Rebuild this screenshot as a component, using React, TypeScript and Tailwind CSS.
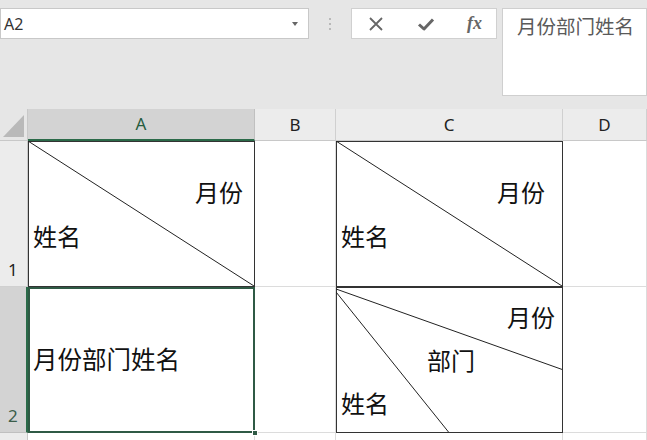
import React from 'react';

const cjk = { fontFamily: '"Microsoft YaHei", "Noto Sans CJK SC", sans-serif' };
const ui = { fontFamily: '"Noto Sans", "Open Sans", sans-serif' };

function Diagonal({ lines }: { lines: [number, number, number, number][] }) {
  return (
    <svg className="absolute inset-0 w-full h-full pointer-events-none" viewBox="0 0 227 146" preserveAspectRatio="none">
      {lines.map((l, i) => (
        <line key={i} x1={l[0]} y1={l[1]} x2={l[2]} y2={l[3]} stroke="#222" strokeWidth={1} vectorEffect="non-scaling-stroke" />
      ))}
    </svg>
  );
}

function ColHead({ label, active }: { label: string; active?: boolean }) {
  return (
    <div
      className={
        'flex items-center justify-center text-[17px] border-r ' +
        (active
          ? 'bg-[#d3d3d3] text-[#265b3e] border-[#c0c0c0] border-b-2 border-b-[#2b6a49]'
          : 'bg-[#ececec] text-[#222] border-[#d0d0d0] border-b border-b-[#c8c8c8]')
      }
      style={ui}
    >
      {label}
    </div>
  );
}

function RowHead({ n, active }: { n: string; active?: boolean }) {
  return (
    <div
      className={
        'flex items-end pl-2 pb-1 text-[17px] border-b ' +
        (active
          ? 'bg-[#d3d3d3] text-[#3b5d4a] border-[#c0c0c0] border-r-2 border-r-[#2b6a49]'
          : 'bg-[#ececec] text-[#222] border-[#d0d0d0] border-r border-r-[#c8c8c8]')
      }
      style={ui}
    >
      {n}
    </div>
  );
}

const cell = 'relative bg-white border-r border-b border-[#dcdcdc]';
const boxed = ' outline outline-1 -outline-offset-1 outline-[#333]';

export default function App() {
  return (
    <div className="w-[647px] h-[440px] overflow-hidden bg-[#e6e6e6] flex flex-col">
      {/* formula bar */}
      <div className="h-[109px] flex items-start pt-2 gap-0 shrink-0">
        <div className="w-[309px] h-[31px] bg-white border border-[#c8c8c8] flex items-center justify-between pl-[3px] pr-[10px]" style={ui}>
          <span className="text-[16px] text-[#333]">A2</span>
          <span className="w-0 h-0 border-l-[3px] border-r-[3px] border-t-[4px] border-l-transparent border-r-transparent border-t-[#666]" />
        </div>
        <div className="w-[42px] h-[31px] flex flex-col items-center justify-center gap-[3px]">
          <span className="w-[2px] h-[2px] bg-[#aaa] rounded-full" />
          <span className="w-[2px] h-[2px] bg-[#aaa] rounded-full" />
          <span className="w-[2px] h-[2px] bg-[#aaa] rounded-full" />
        </div>
        <div className="w-[146px] h-[31px] bg-white border border-[#d0d0d0] flex items-center justify-between pl-[16px] pr-[14px] text-[#666]">
          <svg width="16" height="16" viewBox="0 0 16 16"><path d="M2 2 L14 14 M14 2 L2 14" stroke="#666" strokeWidth="1.8" /></svg>
          <svg width="18" height="16" viewBox="0 0 18 16"><path d="M2 8.5 L7 13 L16 3.5" stroke="#666" strokeWidth="3" fill="none" strokeLinejoin="round" /></svg>
          <span className="italic font-bold text-[18px] text-[#666]" style={{ fontFamily: '"Liberation Serif", serif' }}>fx</span>
        </div>
        <div className="ml-[5px] flex-1 h-[88px] bg-white border border-[#cfcfcf] pl-[14px] pt-[2px]">
          <span className="text-[19.5px] text-[#5a5a5a]" style={cjk}>月份部门姓名</span>
        </div>
      </div>

      {/* sheet */}
      <div className="grid grid-cols-[28px_227px_81px_227px_84px] grid-rows-[32px_146px_146px_20px] flex-1">
        {/* corner */}
        <div className="bg-[#e6e6e6] border-r border-b border-[#c8c8c8] flex items-end justify-end p-[3px]">
          <div className="w-[22px] h-[22px] bg-[#b9b9b9] [clip-path:polygon(100%_0,100%_100%,0_100%)]" />
        </div>
        <ColHead label="A" active />
        <ColHead label="B" />
        <ColHead label="C" />
        <ColHead label="D" />

        {/* row 1 */}
        <RowHead n="1" />
        <div className={cell + boxed + ' flex flex-col pt-[29px] px-[5px] text-[24px] leading-[44px] text-[#111]'} style={cjk}>
          <Diagonal lines={[[0, 0, 227, 146]]} />
          <span className="self-end pr-[6px]">月份</span>
          <span>姓名</span>
        </div>
        <div className={cell} />
        <div className={cell + boxed + ' flex flex-col pt-[29px] px-[5px] text-[24px] leading-[44px] text-[#111]'} style={cjk}>
          <Diagonal lines={[[0, 0, 227, 146]]} />
          <span className="self-end pr-[12px]">月份</span>
          <span>姓名</span>
        </div>
        <div className={cell} />

        {/* row 2 */}
        <RowHead n="2" active />
        <div className={cell + ' z-10 outline outline-2 -outline-offset-2 outline-[#2f5a45] flex items-center pl-[5px] text-[24.5px] text-[#111]'} style={cjk}>
          月份部门姓名
          <span className="absolute z-20 -right-[4px] -bottom-[4px] w-[6px] h-[6px] bg-[#2f5a45] border border-white" />
        </div>
        <div className={cell} />
        <div className={cell + boxed + ' flex flex-col pt-[8px] px-[5px] text-[24px] leading-[43px] text-[#111]'} style={cjk}>
          <Diagonal lines={[[0, 2, 227, 83], [0, 5, 113, 146]]} />
          <span className="self-end pr-[2px]">月份</span>
          <span className="pl-[86px]">部门</span>
          <span>姓名</span>
        </div>
        <div className={cell} />

        {/* row 3 */}
        <div className="bg-[#ececec] border-r border-[#c8c8c8]" />
        <div className={cell} />
        <div className={cell} />
        <div className={cell} />
        <div className={cell} />
      </div>
    </div>
  );
}
